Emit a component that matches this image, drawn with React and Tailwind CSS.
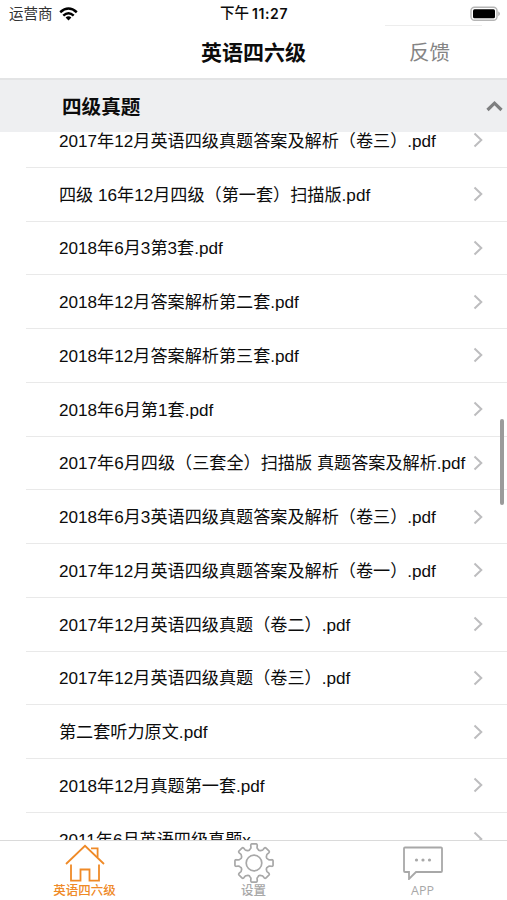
import React from 'react';

const files = [
  '2017年12月英语四级真题答案及解析（卷三）.pdf',
  '四级 16年12月四级（第一套）扫描版.pdf',
  '2018年6月3第3套.pdf',
  '2018年12月答案解析第二套.pdf',
  '2018年12月答案解析第三套.pdf',
  '2018年6月第1套.pdf',
  '2017年6月四级（三套全）扫描版 真题答案及解析.pdf',
  '2018年6月3英语四级真题答案及解析（卷三）.pdf',
  '2017年12月英语四级真题答案及解析（卷一）.pdf',
  '2017年12月英语四级真题（卷二）.pdf',
  '2017年12月英语四级真题（卷三）.pdf',
  '第二套听力原文.pdf',
  '2018年12月真题第一套.pdf',
  '2011年6月英语四级真题x',
];

function StatusBar() {
  return (
    <div className="grid h-[27px] shrink-0 grid-cols-3 items-center pl-[9px] pr-[6px] text-[14.5px] leading-none">
      <div className="flex items-center gap-[6px]">
        <span className="pt-[2px] text-[#333]">运营商</span>
        <svg width="19" height="14" viewBox="0 0 19 14" fill="none" stroke="#000" strokeWidth="2.5">
          <path d="M1.2 5.2Q9.5 -2.2 17.8 5.2" />
          <path d="M4.3 8.6Q9.5 3.8 14.7 8.6" />
          <path d="M9.5 13.4L6.6 10.4Q9.5 8 12.4 10.4Z" fill="#000" stroke="none" />
        </svg>
      </div>
      <div className="flex items-center justify-center gap-[3px] whitespace-nowrap pr-[2px] font-medium">
        <span className="text-[14.5px]">下午</span>
        <span className="font-['Inter','Noto_Sans_CJK_SC',sans-serif] text-[14px] font-semibold tracking-[0.6px]">11:27</span>
      </div>
      <div className="flex justify-end">
        <svg width="31" height="16" viewBox="0 0 31 16">
          <rect x="1" y="1.2" width="26" height="13" rx="3.5" fill="#fff" stroke="#b5b5b5" strokeWidth="1.4" />
          <rect x="3" y="3.2" width="22" height="9" rx="1.5" fill="#000" />
          <path d="M28.3 5.2Q31.5 7.7 28.3 10.2Z" fill="#aaa" />
        </svg>
      </div>
    </div>
  );
}

function TabItem({ label, className, children }) {
  return (
    <div className={`flex flex-1 flex-col items-center text-[12.5px] font-medium leading-[14px] ${className}`}>
      <div className="flex h-[43px] items-center">{children}</div>
      <span>{label}</span>
    </div>
  );
}

function Gear() {
  const teeth = [0, 45, 90, 135, 180, 225, 270, 315];
  const points = teeth.map((deg) => {
    const pt = (r, a) => {
      const t = ((deg + a) * Math.PI) / 180;
      return `${(20 + r * Math.sin(t)).toFixed(2)} ${(20 - r * Math.cos(t)).toFixed(2)}`;
    };
    return `${deg === 0 ? 'M' : 'L'}${pt(14.6, -15)} Q${pt(15, -11.5)} ${pt(16, -11)} L${pt(18, -10.5)} Q${pt(19.2, -9.5)} ${pt(19.2, -7)} L${pt(19.2, 7)} Q${pt(19.2, 9.5)} ${pt(18, 10.5)} L${pt(16, 11)} Q${pt(15, 11.5)} ${pt(14.6, 15)} Q${pt(12.6, 22.5)} ${pt(14.6, 30)}`;
  });
  return (
    <svg width="40" height="40" viewBox="0 0 40 40" fill="none" stroke="currentColor" strokeWidth="1.7" strokeLinejoin="round">
      <path d={points.join(' ') + 'Z'} />
      <circle cx="20" cy="20" r="7.8" />
    </svg>
  );
}

export default function App() {
  return (
    <div className="flex h-[900px] w-[507px] flex-col overflow-hidden bg-white font-['Liberation_Sans','Noto_Sans_CJK_SC',sans-serif] text-[#0c0c0c]">
      <StatusBar />
      <header className="grid h-[53px] shrink-0 grid-cols-[1fr_auto_1fr] items-center border-b-2 border-[#e3e4e5]">
        <span />
        <h1 className="text-[21px] font-bold leading-none">英语四六级</h1>
        <div className="flex h-full flex-col pl-[79px]">
          <div className="-mt-[2.5px] h-px w-[97px] shrink-0 bg-[#ededed]" />
          <div className="flex flex-1 items-center pl-[24px] pt-[3px] text-[20.5px] leading-none text-[#858585]">反馈</div>
        </div>
      </header>

      <div className="flex h-[52px] shrink-0 items-center justify-between bg-[#eeeff1] pl-[62px] pr-[4px]">
        <h2 className="pt-[3px] text-[19.6px] font-bold leading-none">四级真题</h2>
        <svg width="17" height="12" viewBox="0 0 17 12" fill="none" stroke="#7e7f80" strokeWidth="3.2">
          <path d="M1.5 10L8.5 3.2L15.5 10" />
        </svg>
      </div>

      <main className="relative h-[708px] shrink-0 overflow-hidden">
        <ul className="-mt-[18px]">
          {files.map((name) => (
            <li key={name} className="ml-[26px] flex h-[53.76px] items-center justify-between border-b border-[#e9e9e9] pl-[33px] pr-[24px]">
              <span className="whitespace-nowrap pt-[1px] text-[17.14px] leading-[24px]">{name}</span>
              <svg className="shrink-0" width="10" height="16" viewBox="0 0 10 16" fill="none" stroke="#bdbdbf" strokeWidth="2">
                <path d="M1.5 1.5L8.3 8L1.5 14.5" />
              </svg>
            </li>
          ))}
        </ul>
        <div className="absolute right-[3px] top-[287px] h-[86px] w-[4px] rounded-full bg-[#9b9b9b]" />
      </main>

      <nav className="flex flex-1 border-t border-[#dadada]">
        <TabItem label="英语四六级" className="text-[#ef8a27]">
          <svg width="40" height="38" viewBox="0 0 40 38" fill="none" stroke="currentColor" strokeWidth="1.8">
            <path d="M1 20L20 1.8L39 20" />
            <path d="M26 4.3H32.6V13" />
            <path d="M6 20.5V36.7H15.5V25.5H24.5V36.7H34V20.5" />
          </svg>
        </TabItem>
        <TabItem label="设置" className="text-[#a8a8a8]">
          <Gear />
        </TabItem>
        <TabItem label="APP" className="font-['Open_Sans','Noto_Sans_CJK_SC',sans-serif] text-[#a8a8a8]">
          <svg width="40" height="34" viewBox="0 0 40 34" fill="none" stroke="currentColor" strokeWidth="1.8">
            <path d="M2 1.5H38Q39 1.5 39 2.5V25Q39 26 38 26H13L6 33V26H2Q1 26 1 25V2.5Q1 1.5 2 1.5Z" />
            <g fill="currentColor" stroke="none">
              <circle cx="13.5" cy="14" r="1.6" />
              <circle cx="20" cy="14" r="1.6" />
              <circle cx="26.5" cy="14" r="1.6" />
            </g>
          </svg>
        </TabItem>
      </nav>
    </div>
  );
}
